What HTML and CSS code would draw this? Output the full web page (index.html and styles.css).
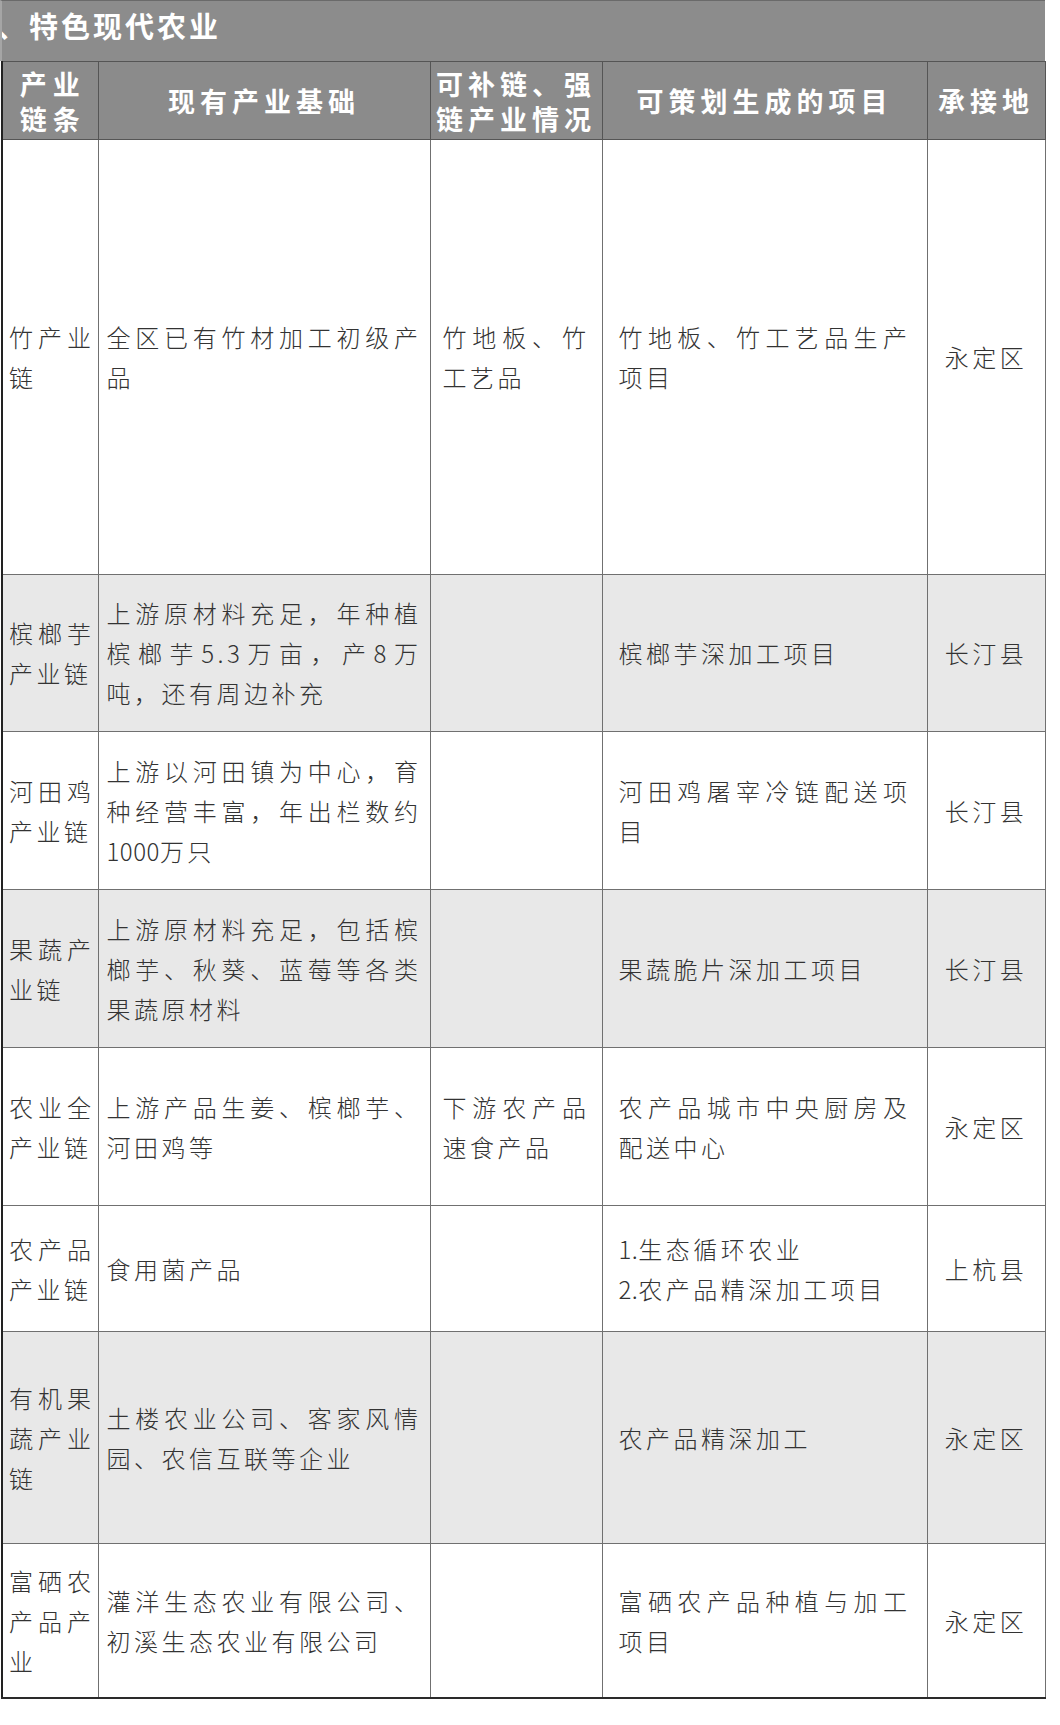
FILE: index.html
```html
<!DOCTYPE html>
<html lang="zh-CN">
<head>
<meta charset="utf-8">
<title>特色现代农业</title>
<link rel="stylesheet" href="styles.css">
</head>
<body>
<div class="page">
  <div class="title"><span class="title-text">、特色现代农业</span></div>
  <table class="grid">
    <colgroup>
      <col class="w1"><col class="w2"><col class="w3"><col class="w4"><col class="w5">
    </colgroup>
    <thead>
      <tr>
        <th class="h-name">产业链条</th>
        <th>现有产业基础</th>
        <th>可补链、强链产业情况</th>
        <th>可策划生成的项目</th>
        <th>承接地</th>
      </tr>
    </thead>
    <tbody>
      <tr class="r1">
        <td class="c-name">竹产业链</td>
        <td class="c-base">全区已有竹材加工初级产品</td>
        <td class="c-add">竹地板、竹工艺品</td>
        <td class="c-proj">竹地板、竹工艺品生产项目</td>
        <td class="c-loc">永定区</td>
      </tr>
      <tr class="r2 shade">
        <td class="c-name">槟榔芋产业链</td>
        <td class="c-base">上游原材料充足，年种植槟榔芋5.3万亩，产8万吨，还有周边补充</td>
        <td class="c-add"></td>
        <td class="c-proj">槟榔芋深加工项目</td>
        <td class="c-loc">长汀县</td>
      </tr>
      <tr class="r3">
        <td class="c-name">河田鸡产业链</td>
        <td class="c-base">上游以河田镇为中心，育种经营丰富，年出栏数约<span class="num">1000</span>万只</td>
        <td class="c-add"></td>
        <td class="c-proj">河田鸡屠宰冷链配送项目</td>
        <td class="c-loc">长汀县</td>
      </tr>
      <tr class="r4 shade">
        <td class="c-name">果蔬产业链</td>
        <td class="c-base">上游原材料充足，包括槟榔芋、秋葵、蓝莓等各类果蔬原材料</td>
        <td class="c-add"></td>
        <td class="c-proj">果蔬脆片深加工项目</td>
        <td class="c-loc">长汀县</td>
      </tr>
      <tr class="r5">
        <td class="c-name">农业全产业链</td>
        <td class="c-base">上游产品生姜、槟榔芋、河田鸡等</td>
        <td class="c-add">下游农产品速食产品</td>
        <td class="c-proj">农产品城市中央厨房及配送中心</td>
        <td class="c-loc">永定区</td>
      </tr>
      <tr class="r6">
        <td class="c-name">农产品产业链</td>
        <td class="c-base">食用菌产品</td>
        <td class="c-add"></td>
        <td class="c-proj"><span class="num">1.</span>生态循环农业<br><span class="num">2.</span>农产品精深加工项目</td>
        <td class="c-loc">上杭县</td>
      </tr>
      <tr class="r7 shade">
        <td class="c-name">有机果蔬产业链</td>
        <td class="c-base">土楼农业公司、客家风情园、农信互联等企业</td>
        <td class="c-add"></td>
        <td class="c-proj">农产品精深加工</td>
        <td class="c-loc">永定区</td>
      </tr>
      <tr class="r8 last">
        <td class="c-name">富硒农产品产业</td>
        <td class="c-base">灌洋生态农业有限公司、初溪生态农业有限公司</td>
        <td class="c-add"></td>
        <td class="c-proj">富硒农产品种植与加工项目</td>
        <td class="c-loc">永定区</td>
      </tr>
    </tbody>
  </table>
</div>
</body>
</html>
```

FILE: styles.css
```css
html, body {
  margin: 0;
  padding: 0;
  background: #ffffff;
}

.page {
  width: 1060px;
  font-family: "Noto Sans CJK SC", "Noto Sans", "DejaVu Sans", sans-serif;
}

.title {
  box-sizing: border-box;
  width: 1045px;
  height: 61px;
  background: #8c8c8c;
  border-top: 1px solid #6a6a6a;
  border-left: 2px solid #a5a5a5;
  overflow: hidden;
  white-space: nowrap;
}

.title-text {
  display: block;
  margin-left: -5px;
  padding-top: 7px;
  color: #ffffff;
  font-size: 29px;
  font-weight: 700;
  letter-spacing: 3px;
  line-height: 34px;
}

.grid {
  border-collapse: collapse;
  table-layout: fixed;
  width: 1043px;
  margin-left: 1px;
  border-left: 2px solid #222222;
  border-bottom: 2px solid #2a2a2a;
}

.w1 { width: 96px; }
.w2 { width: 332px; }
.w3 { width: 172px; }
.w4 { width: 325px; }
.w5 { width: 118px; }

.grid th {
  height: 77px;
  padding: 0 2px;
  background: #8b8b8b;
  color: #ffffff;
  font-size: 27px;
  font-weight: 700;
  letter-spacing: 5px;
  line-height: 35px;
  text-align: center;
  vertical-align: middle;
  border: 1px solid #555555;
}

.grid th.h-name {
  padding: 0 4px 0 9px;
  letter-spacing: 6px;
}

.grid td {
  padding: 0;
  color: #333333;
  font-size: 24px;
  font-weight: 300;
  letter-spacing: 3.5px;
  line-height: 40px;
  text-align: justify;
  vertical-align: middle;
  border: 1px solid #707070;
  overflow: hidden;
}

.grid tr:first-child td { border-top-color: #555555; }

.num {
  letter-spacing: 0.5px;
}

.grid td.c-name { padding: 0 3px 0 6px; }
.grid td.c-base { padding: 0 8px 0 8px; }
.grid td.c-add { padding: 0 12px 0 12px; }
.grid td.c-proj { padding: 0 16px 0 16px; }
.grid td.c-loc { padding: 0; text-align: center; }

.shade td { background: #e8e8e8; }

.r1 td { height: 434px; }
.r2 td { height: 156px; }
.r3 td { height: 157px; }
.r4 td { height: 157px; }
.r5 td { height: 157px; }
.r6 td { height: 125px; }
.r7 td { height: 211px; }
.r8 td { height: 153px; }

.last td { border-bottom: 2px solid #2a2a2a; }
```
